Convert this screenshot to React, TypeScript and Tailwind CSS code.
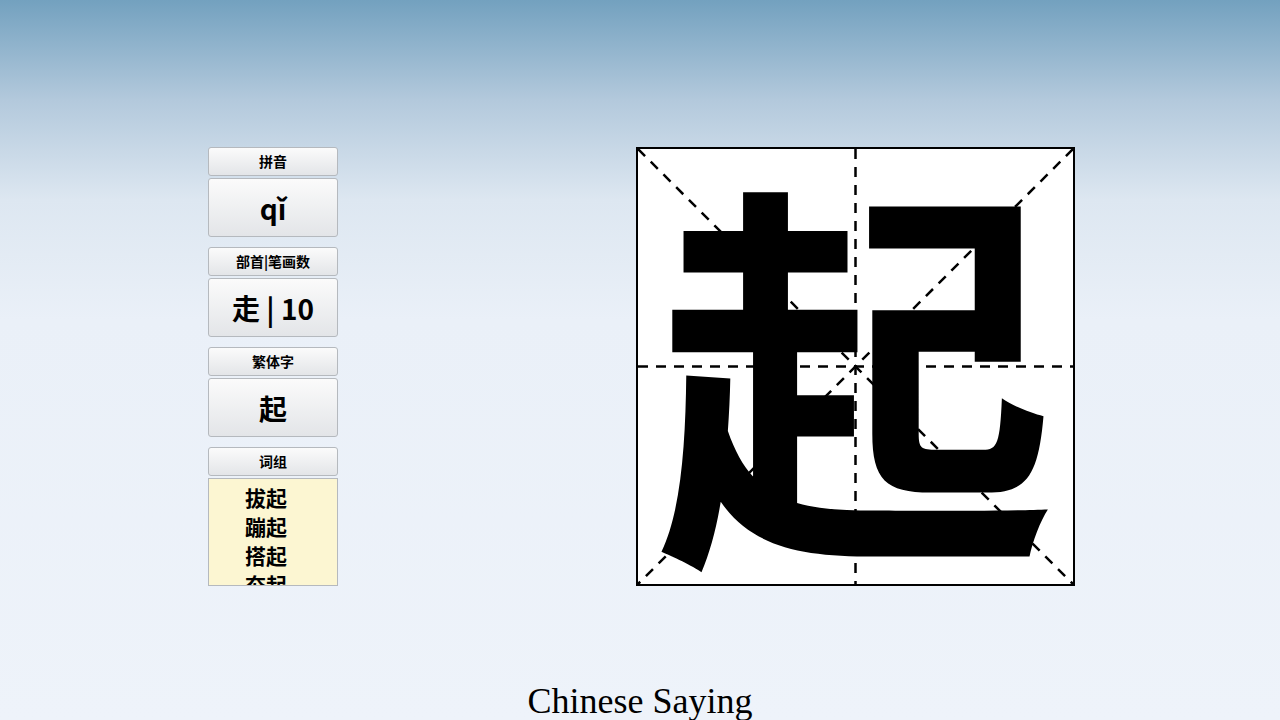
import React from "react";

const cjk = { fontFamily: '"Noto Sans CJK SC", "Liberation Sans", sans-serif' };

function Label({ t }: { t: string }) {
  return (
    <div className="h-[29px] rounded-[3px] border border-[#b5b9be] bg-gradient-to-b from-[#fbfbfb] to-[#e3e5e8] flex items-center justify-center text-[14px] font-bold text-black" style={cjk}>
      {t}
    </div>
  );
}
function Value({ t }: { t: string }) {
  return (
    <div className="h-[59px] rounded-[3px] border border-[#b5b9be] bg-gradient-to-b from-[#fbfbfb] to-[#e3e5e8] flex items-center justify-center text-[28px] font-bold text-black" style={cjk}>
      {t}
    </div>
  );
}

export default function App() {
  return (
    <div className="w-[1280px] h-[720px] overflow-hidden relative bg-[linear-gradient(to_bottom,#73a1bf_0px,#b3c9dc_100px,#dde7f1_200px,#eaf0f8_320px,#eef3fa_720px)]">
      <div className="flex pt-[147px]">
        <div className="ml-[208px] w-[130px] flex flex-col">
          <Label t="拼音" />
          <div className="h-[2px]" />
          <Value t="qǐ" />
          <div className="h-[10px]" />
          <Label t="部首|笔画数" />
          <div className="h-[2px]" />
          <Value t="走 | 10" />
          <div className="h-[10px]" />
          <Label t="繁体字" />
          <div className="h-[2px]" />
          <Value t="起" />
          <div className="h-[10px]" />
          <Label t="词组" />
          <div className="h-[2px]" />
          <div className="h-[108px] overflow-hidden border border-[#b5b9be] bg-[#fcf6d2] pl-[36px] pt-[4px] text-[21px] font-bold leading-[29px] text-black" style={cjk}>
            <div>拔起</div>
            <div>蹦起</div>
            <div>搭起</div>
            <div>夯起</div>
          </div>
        </div>
        <div className="ml-[298px] w-[439px] h-[439px] border-2 border-black bg-white relative overflow-hidden">
          <svg className="absolute inset-0" width="435" height="435" viewBox="0 0 435 435">
            <g stroke="#000" strokeWidth="2.5" strokeDasharray="10 8" fill="none">
              <line x1="0" y1="0" x2="435" y2="435" />
              <line x1="435" y1="0" x2="0" y2="435" />
              <line x1="217.5" y1="0" x2="217.5" y2="435" />
              <line x1="0" y1="217.5" x2="435" y2="217.5" />
            </g>
          </svg>
          <div className="absolute inset-0 flex items-center justify-center pb-[20px] text-[400px] leading-none font-bold text-black" style={cjk}>
            起
          </div>
        </div>
      </div>
      <div className="absolute left-0 right-0 top-[674px] text-center text-[36px] text-black" style={{ fontFamily: '"Liberation Serif", serif' }}>
        Chinese Saying
      </div>
    </div>
  );
}
